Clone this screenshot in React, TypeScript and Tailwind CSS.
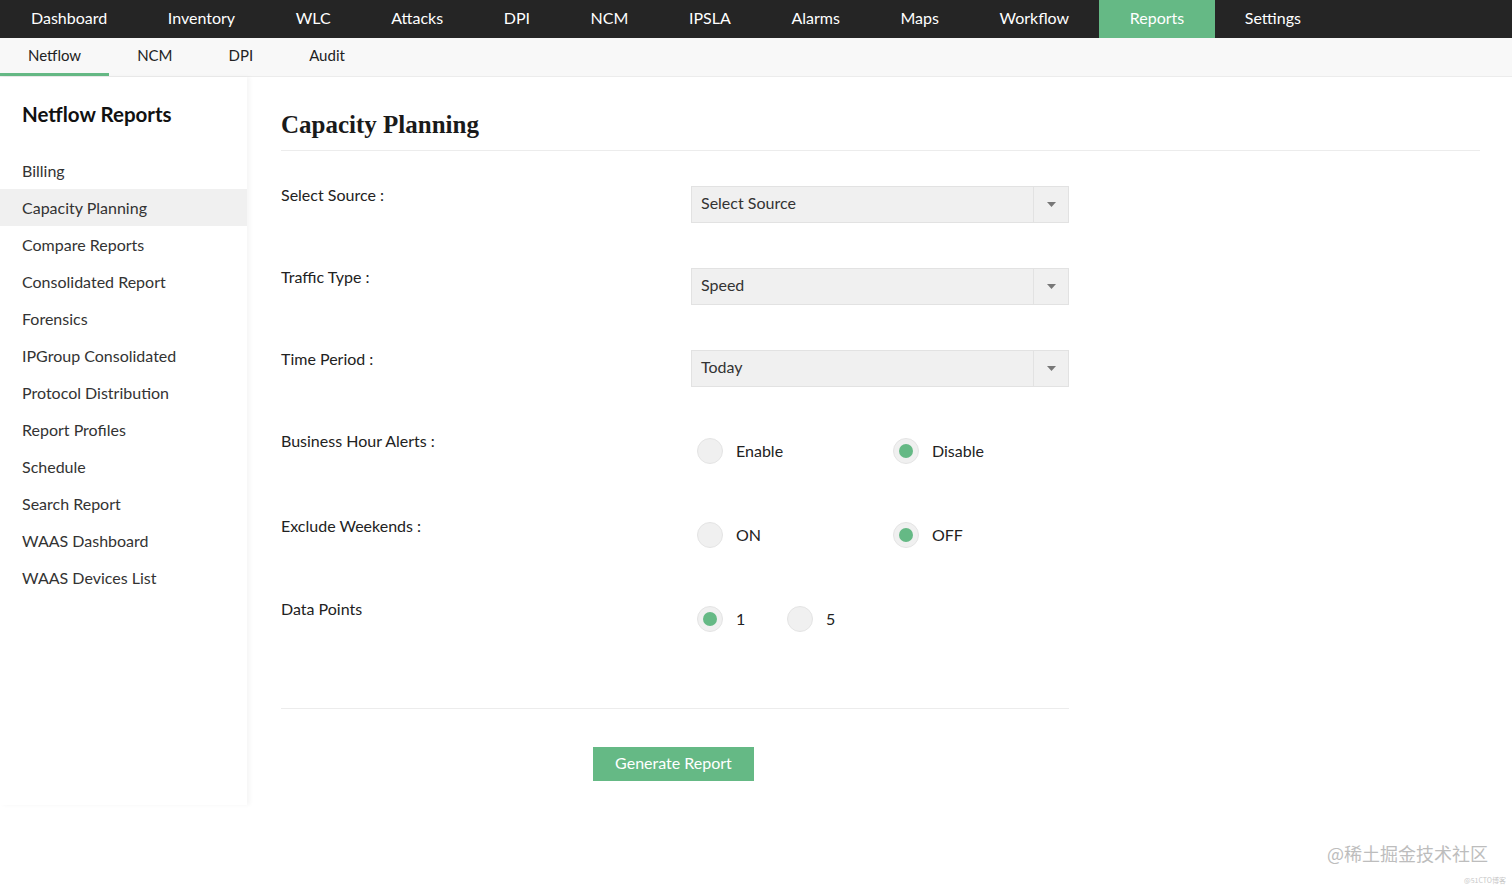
import React from "react";

const topNav = ["Dashboard", "Inventory", "WLC", "Attacks", "DPI", "NCM", "IPSLA", "Alarms", "Maps", "Workflow", "Reports", "Settings"];
const subNav = ["Netflow", "NCM", "DPI", "Audit"];
const sideItems = [
  "Billing",
  "Capacity Planning",
  "Compare Reports",
  "Consolidated Report",
  "Forensics",
  "IPGroup Consolidated",
  "Protocol Distribution",
  "Report Profiles",
  "Schedule",
  "Search Report",
  "WAAS Dashboard",
  "WAAS Devices List",
];

function Select({ value }: { value: string }) {
  return (
    <div className="flex h-[37px] w-[378px] items-stretch border border-[#e2e2e2] bg-[#f0f0f0]">
      <div className="flex flex-1 items-center pb-[3px] pl-[9px] text-[16px] text-[#333]">{value}</div>
      <div className="flex w-[35px] items-center justify-center border-l border-[#e2e2e2]">
        <svg width="9" height="5" viewBox="0 0 9 5">
          <path d="M0 0 L9 0 L4.5 5 Z" fill="#777" />
        </svg>
      </div>
    </div>
  );
}

function Radio({ checked, label, width }: { checked?: boolean; label: string; width: string }) {
  return (
    <div className={`flex items-center ${width}`}>
      <div className="ml-[6px] flex h-[26px] w-[26px] items-center justify-center rounded-full border border-[#e4e4e4] bg-[#f0f0f0]">
        {checked && <div className="h-[14px] w-[14px] rounded-full bg-[#65b985]" />}
      </div>
      <span className="ml-[13px] text-[16px] text-[#222]">{label}</span>
    </div>
  );
}

export default function App() {
  return (
    <div className="relative min-h-[888px] w-full bg-white font-['Lato','Liberation_Sans',sans-serif] text-[#222]">
      {/* Top nav */}
      <div className="flex h-[38px] bg-[#252525]">
        {topNav.map((t, i) => (
          <div
            key={t}
            className={`flex items-center pb-[2px] text-[16px] text-white ${i === 0 ? "pl-[31px] pr-[30.3px]" : "px-[30.3px]"} ${
              t === "Reports" ? "bg-[#65b985] text-[#f4fbf6]" : ""
            }`}
          >
            {t}
          </div>
        ))}
      </div>
      {/* Sub nav */}
      <div className="flex h-[39px] border-b border-[#ececec] bg-[#f8f8f8]">
        {subNav.map((t, i) => (
          <div
            key={t}
            className={`flex items-center px-[28px] text-[15px] text-[#222] ${
              i === 0 ? "border-b-[3px] border-[#65b985] pb-[1px]" : "pb-[4px]"
            }`}
          >
            {t}
          </div>
        ))}
      </div>
      <div className="flex">
        {/* Sidebar */}
        <div className="h-[728px] w-[247px] shrink-0 bg-white shadow-[3px_0_4px_rgba(0,0,0,0.04)]">
          <div className="pl-[22px] pt-[23px] text-[20.5px] font-bold leading-[28px] text-[#111]">Netflow Reports</div>
          <div className="mt-[24px] flex flex-col">
            {sideItems.map((s) => (
              <div
                key={s}
                className={`flex h-[37px] items-center pl-[22px] text-[16px] text-[#333] ${
                  s === "Capacity Planning" ? "bg-[#f0f0f0] text-[#111]" : ""
                }`}
              >
                {s}
              </div>
            ))}
          </div>
        </div>
        {/* Main */}
        <div className="flex-1 pl-[34px] pr-[32px]">
          <div className="border-b border-[#ececec] pb-[9px] pt-[32px] font-['Liberation_Serif',serif] text-[25px] font-bold leading-[32px] text-[#1a1a1a]">
            Capacity Planning
          </div>
          <div className="mt-[35px] w-[788px]">
            <div className="grid h-[82px] grid-cols-[410px_378px]">
              <div className="text-[16px] leading-[18px]">Select Source :</div>
              <Select value="Select Source" />
            </div>
            <div className="grid h-[82px] grid-cols-[410px_378px]">
              <div className="text-[16px] leading-[18px]">Traffic Type :</div>
              <Select value="Speed" />
            </div>
            <div className="grid h-[82px] grid-cols-[410px_378px]">
              <div className="text-[16px] leading-[18px]">Time Period :</div>
              <Select value="Today" />
            </div>
            <div className="grid h-[85px] grid-cols-[410px_378px]">
              <div className="text-[16px] leading-[18px]">Business Hour Alerts :</div>
              <div className="mt-[6px] flex h-[26px]">
                <Radio label="Enable" width="w-[196px]" />
                <Radio label="Disable" checked width="w-[150px]" />
              </div>
            </div>
            <div className="grid h-[83px] grid-cols-[410px_378px]">
              <div className="text-[16px] leading-[18px]">Exclude Weekends :</div>
              <div className="mt-[5px] flex h-[26px]">
                <Radio label="ON" width="w-[196px]" />
                <Radio label="OFF" checked width="w-[150px]" />
              </div>
            </div>
            <div className="grid h-[108px] grid-cols-[410px_378px]">
              <div className="text-[16px] leading-[18px]">Data Points</div>
              <div className="mt-[6px] flex h-[26px]">
                <Radio label="1" checked width="w-[90px]" />
                <Radio label="5" width="w-[90px]" />
              </div>
            </div>
            <div className="border-t border-[#ececec]" />
            <div className="mt-[38px] flex pl-[312px]">
              <button className="h-[34px] w-[161px] pb-[2px] bg-[#65b985] text-[16px] text-white">Generate Report</button>
            </div>
          </div>
        </div>
      </div>
      {/* watermark */}
      <div className="absolute right-[24px] top-[840px] font-['Noto_Sans_CJK_SC',sans-serif] text-[18px] text-[#bdbdbd]">
        @稀土掘金技术社区
      </div>
      <div className="absolute right-[6px] top-[875px] font-['Noto_Sans_CJK_SC',sans-serif] text-[7px] text-[#c8c8c8]">
        @51CTO博客
      </div>
    </div>
  );
}
